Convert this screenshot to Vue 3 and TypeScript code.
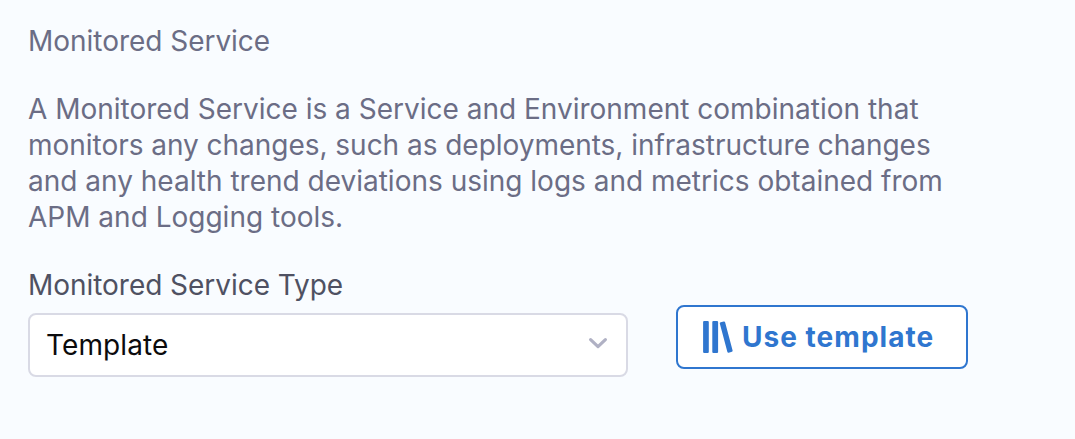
<script setup lang="ts">
const title: string = 'Monitored Service'
const lines: string[] = [
  'A Monitored Service is a Service and Environment combination that',
  'monitors any changes, such as deployments, infrastructure changes',
  'and any health trend deviations using logs and metrics obtained from',
  'APM and Logging tools.',
]
</script>

<template>
  <main class="panel">
    <h2 class="title">{{ title }}</h2>
    <p class="description"><span v-for="line in lines" :key="line">{{ line }}</span></p>
    <div class="row">
      <div class="field">
        <span class="label">Monitored Service Type</span>
        <button class="select" type="button">
          <span>Template</span>
          <svg class="chevron" width="20" height="14" viewBox="0 0 20 14"><path d="M2.6 2.6 L10 9.6 L17.4 2.6" /></svg>
        </button>
      </div>
      <button class="template" type="button">
        <svg width="30" height="32" viewBox="0 0 30 32">
          <rect x="0.1" width="5.7" height="32" rx="1.1" />
          <rect x="9.3" width="5.8" height="32" rx="1.1" />
          <path d="M17.7 1.2 L20.8 .5 Q21.8 .3 22.1 1.3 L29.6 29.5 Q29.9 30.5 28.9 30.8 L25.7 31.7 Q24.7 31.9 24.4 30.9 L16.8 2.6 Q16.6 1.5 17.7 1.2Z" />
        </svg>
        <span>Use template</span>
      </button>
    </div>
  </main>
</template>

<style>
body { background: #f9fcff; }
</style>

<style scoped>
.panel { box-sizing: border-box; height: 439px; padding: 23px 28px; background: #f9fcff; font-family: Inter, sans-serif; color: #6b6d85; font-size: 28px; line-height: 36px; }
.title { margin: 0; font-size: 28px; font-weight: 400; letter-spacing: -0.03px; }
.description { margin: 32px 0; }
.description span { display: block; white-space: nowrap; }
.description span:nth-child(2) { letter-spacing: -0.03px; }
.row { display: flex; gap: 48px; align-items: flex-start; }
.field { width: 600px; }
.label { display: block; color: #4f5162; letter-spacing: -0.04px; }
.select { box-sizing: border-box; width: 600px; height: 64px; margin: 10px 0 0; padding: 0 18px 0 16px; display: flex; align-items: center; justify-content: space-between; border: 2px solid #d9dae5; border-radius: 8px; background: #fff; color: #0b0b0d; font: 400 28px/36px Inter, sans-serif; letter-spacing: 0.1px; }
.chevron { fill: none; stroke: #b0b1c4; stroke-width: 3.2; stroke-linecap: round; stroke-linejoin: round; position: relative; top: -1px; }
.template { box-sizing: border-box; width: 292px; height: 64px; margin: 38px 0 0; padding: 0 25px; display: flex; align-items: center; gap: 9px; border: 2px solid #2f76cf; border-radius: 8px; background: #fff; color: #2f76cf; font: 700 28px/36px Inter, sans-serif; letter-spacing: 1.03px; white-space: nowrap; }
.template svg { fill: currentColor; flex: none; }
</style>
